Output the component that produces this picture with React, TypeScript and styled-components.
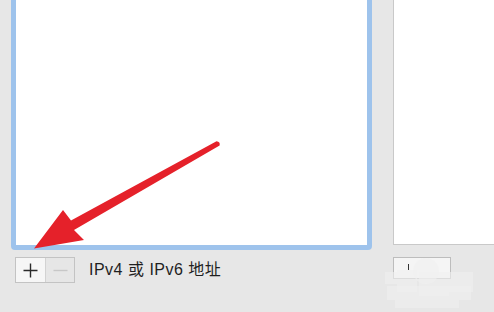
import { createGlobalStyle, styled } from "styled-components";

const GlobalStyle = createGlobalStyle`
  html, body {
    margin: 0;
    padding: 0;
    background: #e7e7e7;
  }
  body {
    font-family: "Liberation Sans", "Noto Sans CJK SC", sans-serif;
  }
`;

const Page = styled.div`
  position: relative;
  width: 494px;
  height: 312px;
  overflow: hidden;
  background: #e7e7e7;
  display: grid;
  grid-template-columns: 361px 1fr;
  column-gap: 21px;
  padding-left: 11px;
  box-sizing: border-box;
`;

const Column = styled.div`
  display: flex;
  flex-direction: column;
  align-items: flex-start;
`;

const ListBox = styled.div`
  width: 100%;
  height: 258px;
  margin-top: -8px;
  box-sizing: border-box;
  background: #ffffff;
  border: 5px solid #9ec3ec;
  border-radius: 4px;
`;

const SidePanel = styled.div`
  width: 120px;
  height: 253px;
  margin-top: -8px;
  box-sizing: border-box;
  background: #ffffff;
  border: 1px solid #c9c9c9;
  border-right: none;
`;

const Toolbar = styled.div`
  display: flex;
  align-items: center;
  margin-top: 7px;
  padding-left: 4px;
  gap: 14px;
`;

const Segmented = styled.div`
  display: flex;
  border: 1px solid #c3c3c3;
  height: 26px;
  box-sizing: border-box;
`;

const SegButton = styled.button<{ $disabled?: boolean }>`
  width: 29px;
  height: 24px;
  padding: 0;
  border: none;
  border-left: ${(p) => (p.$disabled ? "1px solid #d2d2d2" : "none")};
  background: ${(p) => (p.$disabled ? "#e6e6e6" : "#f6f6f6")};
  color: ${(p) => (p.$disabled ? "#c7c7c7" : "#2a2a2a")};
  display: flex;
  align-items: center;
  justify-content: center;
`;

const Label = styled.span`
  font-size: 16px;
  color: #1f1f1f;
  letter-spacing: 0.5px;
  line-height: 26px;
`;

const SideButton = styled.div`
  position: relative;
  margin-top: 12px;
  width: 58px;
  height: 22px;
  box-sizing: border-box;
  border: 1px solid #bdbdbd;
  background: #f5f5f5;
`;

const Tick = styled.span`
  position: absolute;
  left: 14px;
  top: 6px;
  width: 1px;
  height: 6px;
  background: #333;
`;

const Arrow = styled.svg`
  position: absolute;
  left: 0;
  top: 0;
  pointer-events: none;
`;

const Watermark = styled.div`
  position: absolute;
  left: 385px;
  top: 258px;
  width: 100px;
  height: 52px;
  pointer-events: none;
`;

const Blot = styled.span<{ $round?: boolean }>`
  position: absolute;
  background: rgba(240, 240, 240, 0.6);
  border-radius: ${(p) => (p.$round ? "50%" : "0")};
`;

const blots = [
  { x: 28, y: 0, w: 26, h: 26, round: true },
  { x: 0, y: 14, w: 12, h: 12 },
  { x: 12, y: 12, w: 20, h: 22 },
  { x: 34, y: 14, w: 30, h: 24 },
  { x: 64, y: 14, w: 24, h: 20 },
  { x: 2, y: 28, w: 84, h: 14 },
  { x: 10, y: 42, w: 64, h: 8 },
];

function PlusIcon() {
  return (
    <svg width="15" height="15" viewBox="0 0 15 15">
      <path d="M7.5 0.5v14M0.5 7.5h14" stroke="currentColor" strokeWidth="1.4" />
    </svg>
  );
}

function MinusIcon() {
  return (
    <svg width="15" height="15" viewBox="0 0 15 15">
      <path d="M0.5 7.5h14" stroke="currentColor" strokeWidth="1.4" />
    </svg>
  );
}

export default function App() {
  return (
    <>
      <GlobalStyle />
      <Page>
        <Column>
          <ListBox />
          <Toolbar>
            <Segmented>
              <SegButton>
                <PlusIcon />
              </SegButton>
              <SegButton $disabled>
                <MinusIcon />
              </SegButton>
            </Segmented>
            <Label>IPv4 或 IPv6 地址</Label>
          </Toolbar>
        </Column>
        <Column>
          <SidePanel />
          <SideButton>
            <Tick />
          </SideButton>
        </Column>
        <Watermark>
          {blots.map((b, i) => (
            <Blot
              key={i}
              $round={b.round}
              style={{ left: b.x, top: b.y, width: b.w, height: b.h }}
            />
          ))}
        </Watermark>
        <Arrow width="494" height="312" viewBox="0 0 494 312">
          <path
            d="M216.5 141.2 Q220.5 141.5 219.6 145.6 L74 230 L84 240 L34 248.5 L63 210 L71 220.5 Z"
            fill="#e5212a"
          />
        </Arrow>
      </Page>
    </>
  );
}
